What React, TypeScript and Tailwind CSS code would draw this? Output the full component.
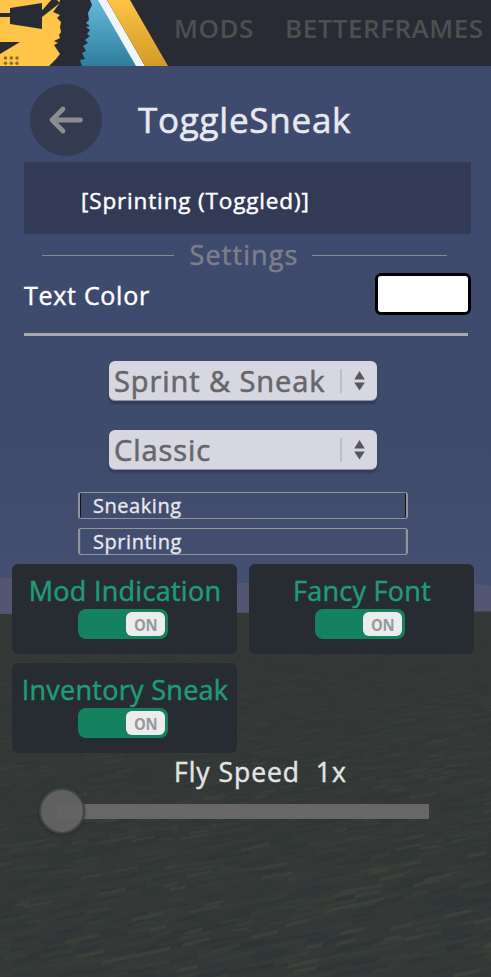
import { useState } from "react";
import clsx from "clsx";

// small seeded generator so the terrain looks the same on every render
function seeded(seed: number) {
  let s = seed;
  return () => {
    s = (s * 1664525 + 1013904223) % 4294967296;
    return s / 4294967296;
  };
}

const GROUND_TONES = ["#2f3537", "#303638", "#303638", "#323839", "#373d39", "#383e39", "#363c38", "#3e443b"];

function buildStreaks() {
  const rand = seeded(71);
  const out: { d: string; fill: string; opacity: number }[] = [];
  let y = 640;
  while (y < 1080) {
    const depth = (Math.min(y, 977) - 613) / 364;
    const h = 0.8 + depth * 3;
    let x = -20 - rand() * 30;
    while (x < 500) {
      const w = 6 + depth * 10 + rand() * (6 + depth * 14);
      if (rand() < 0.6) {
        const slope = 0.05 + depth * 0.17;
        const top = y - x * 0.19 * depth + (rand() - 0.5) * h * 0.8;
        const rise = w * slope;
        const tone = Math.floor(rand() * GROUND_TONES.length);
        out.push({
          d: `M${x.toFixed(1)} ${top.toFixed(1)}l${w.toFixed(1)} ${(-rise).toFixed(1)}l${(-h * 0.4).toFixed(1)} ${h.toFixed(1)}l${(-w).toFixed(1)} ${rise.toFixed(1)}z`,
          fill: GROUND_TONES[tone],
          opacity: 0.1 + depth * 0.75,
        });
      }
      x += w;
    }
    y += h;
  }
  return out;
}

const STREAKS = buildStreaks();

function WorldBackground() {
  return (
    <svg className="absolute inset-0 -z-10" width="491" height="977" viewBox="0 0 491 977" aria-hidden="true">
      <defs>
        <linearGradient id="sky" x1="0" y1="0" x2="0" y2="1">
          <stop offset="0" stopColor="#3e4a6e" />
          <stop offset="0.72" stopColor="#3f4b6d" />
          <stop offset="0.92" stopColor="#434e70" />
          <stop offset="1" stopColor="#485174" />
        </linearGradient>
      </defs>
      <rect width="491" height="616" fill="url(#sky)" />
      <path d="M0 578H237V583H474L491 586V616H0z" fill="#525672" />
      <path d="M0 614L491 611.5V977H0z" fill="#343937" />
      {STREAKS.map((s, i) => (
        <path key={i} d={s.d} fill={s.fill} opacity={s.opacity} />
      ))}
    </svg>
  );
}

function Logo() {
  return (
    <svg width="168" height="66" viewBox="0 0 168 66" className="shrink-0" aria-hidden="true">
      <defs>
        <linearGradient id="blue" x1="0" y1="0" x2="0" y2="1">
          <stop offset="0" stopColor="#64b9da" />
          <stop offset="1" stopColor="#307d9c" />
        </linearGradient>
        <linearGradient id="gold" x1="0" y1="0" x2="0" y2="1">
          <stop offset="0" stopColor="#fcc344" />
          <stop offset="1" stopColor="#d39a28" />
        </linearGradient>
      </defs>
      <path
        d="M0 0H60L59 4L53 12L60 15L57 18L61 22L60 27L61 32L59 35L60 38L54 41L58 43L54 45L60 54L56 59L49 66H0z"
        fill="#ffc548"
      />
      <path d="M0 13H10V8L42 3V10L51 0H57L60 3L42 17V29L10 24V17H0z" fill="#292b34" />
      <path d="M42.5 3V10L51 0H42.5z" fill="#ffc548" />
      <path d="M0 42H20L0 54z" fill="#292b34" />
      <g fill="#8f6b20">
        {[5.5, 11.3, 17].map((x) =>
          [58, 63.3].map((y) => <circle key={`${x}-${y}`} cx={x} cy={y} r="1.7" />)
        )}
      </g>
      <path
        d="M90 0H99L137 66H82L80 60L85 59L82 53L86 51L83 46L88 43L85 40L90 36L87 34L90 30L86 27L90 26L86 23L89 20L88 13L92 5z"
        fill="url(#blue)"
      />
      <path d="M98 0H107L145 66H136z" fill="#f3f4f6" />
      <path d="M107 0H130L168 66H145z" fill="url(#gold)" />
    </svg>
  );
}

function Select({ value }: { value: string }) {
  return (
    <button className="flex h-10 w-[268px] items-center rounded-md border-b border-[#8f91a0] bg-[#d7d7e1] pl-[5px] shadow-[0_3px_2px_rgba(30,34,60,0.4)]">
      <span className="flex-1 whitespace-pre pb-px text-left text-[29px] leading-none tracking-[0.93px] text-[#66666b] [-webkit-text-stroke:0.6px]">
        {value}
      </span>
      <span className="h-6 w-[2px] bg-[#bfbfca]" />
      <svg width="35" height="24" viewBox="0 0 35 24" fill="#57575b" aria-hidden="true">
        <path d="M17.5 2L22.8 10.5H12.2zM12.2 13.5H22.8L17.5 21.5z" />
      </svg>
    </button>
  );
}

function TextField({ value, focused }: { value: string; focused?: boolean }) {
  return (
    <div className="h-[27px] w-[330px] rounded-[3px] border-x-2 border-y border-[#929499]">
      <div
        className={clsx(
          "flex h-full items-center rounded-[2px] border-x pl-3 text-[20px] leading-none tracking-[0.55px] text-[#e7e8ee] [-webkit-text-stroke:0.35px]",
          focused ? "border-[#111218]" : "border-[#535a70]"
        )}
      >
        {value}
      </div>
    </div>
  );
}

function ToggleCard({ label }: { label: string }) {
  const [on, setOn] = useState(true);
  return (
    <div className="flex h-[90px] w-[225px] flex-col items-center rounded-md bg-[#272b32]">
      <div className="flex h-[45px] items-center pt-2 text-[27px] leading-none tracking-[0.28px] whitespace-nowrap text-[#209c74] [-webkit-text-stroke:0.5px]">
        <span className="pl-[1px]">{label}</span>
      </div>
      <button
        onClick={() => setOn(!on)}
        className={clsx(
          "mr-[3px] flex h-[30px] w-[90px] items-center rounded-lg p-[3px]",
          on ? "justify-end bg-[#15825f]" : "justify-start bg-[#555a60]"
        )}
      >
        <span className="flex h-6 w-[39px] items-center justify-center rounded-md bg-[#ececec] pt-[2px] pl-[1px] text-[16px] leading-none font-bold tracking-[-0.2px] text-[#96999b]">
          <span className="inline-block scale-x-[0.93]">{on ? "ON" : "OFF"}</span>
        </span>
      </button>
    </div>
  );
}

export default function App() {
  return (
    <div className="relative isolate h-[977px] w-[491px] overflow-hidden font-['Open_Sans','Noto_Sans',sans-serif]">
      <WorldBackground />

      <header className="flex h-[66px] bg-[#292b34]">
        <Logo />
        <nav className="flex h-[55px] items-center text-[26px] leading-none font-semibold tracking-[0.5px] whitespace-nowrap text-[#4f4f50]">
          <span className="w-[111px] pl-[6px]">MODS</span>
          <span className="pl-[6px]">BETTERFRAMES</span>
        </nav>
      </header>

      <div className="mt-[18px] flex h-[72px] items-center pl-[30px]">
        <button className="flex size-[72px] items-center justify-center rounded-full bg-[#343a4f]" aria-label="Back">
          <svg width="36" height="30" viewBox="0 0 36 30" fill="none" stroke="#8c8d91" strokeWidth="4.8" strokeLinecap="round" strokeLinejoin="round">
            <path d="M32.5 15H4M15 4L4 15L15 26" />
          </svg>
        </button>
        <h1 className="ml-9 pb-px text-[35px] leading-none tracking-[0.75px] text-[#e8e9ef] [-webkit-text-stroke:0.6px]">ToggleSneak</h1>
      </div>

      <div className="mt-[6px] ml-6 flex h-[72px] w-[447px] items-center bg-[#323a56] pt-[7px] pl-[57px] text-[22.5px] leading-none tracking-[0.85px] text-white [-webkit-text-stroke:0.45px]">
        [Sprinting (Toggled)]
      </div>

      <div className="mt-[6px] ml-[42px] flex h-[30px] w-[405px] items-center">
        <span className="h-px w-[132px] bg-[#89898c]" />
        <span className="w-[138px] pb-px pl-[2px] text-center text-[27px] leading-none tracking-[1.1px] text-[#7c7f89] [-webkit-text-stroke:0.5px]">
          Settings
        </span>
        <span className="h-px flex-1 bg-[#89898c]" />
      </div>

      <div className="mt-[3px] flex h-[42px] items-center justify-between pr-5 pl-6">
        <span className="pt-[3px] text-[25px] leading-none tracking-[0.72px] text-white [-webkit-text-stroke:0.45px]">Text Color</span>
        <button className="h-[42px] w-24 rounded-md border-3 border-black bg-white" aria-label="Pick text color" />
      </div>
      <div className="mt-[18px] ml-6 h-[3px] w-[444px] bg-[#aaaab0]" />

      <div className="mt-[25px] ml-[109px] flex flex-col gap-[29px]">
        <Select value="Sprint & Sneak" />
        <Select value="Classic" />
      </div>

      <div className="mt-[22px] ml-[78px] flex flex-col gap-[9px]">
        <TextField value="Sneaking" focused />
        <TextField value="Sprinting" />
      </div>

      <div className="mt-[9px] ml-3 grid grid-cols-[225px_225px] gap-x-3 gap-y-[9px]">
        <ToggleCard label="Mod Indication" />
        <ToggleCard label="Fancy Font" />
        <ToggleCard label="Inventory Sneak" />
      </div>

      <div className="flex h-9 items-center pt-[2px] pl-[174px] text-[26.5px] leading-none tracking-[0.98px] whitespace-pre text-[#e3e5e4] [-webkit-text-stroke:0.45px]">
        {"Fly Speed  1x"}
      </div>
      <div className="relative mt-[15px] ml-[57px] h-[15px] w-[372px] bg-[#676767]">
        <div className="absolute -top-[16px] -left-[18px] size-[46px] rounded-full border-2 border-[#424442] bg-[#5f605f] shadow-[0_1px_3px_rgba(20,22,24,0.5)]">
          <div className="mt-[14px] ml-4 h-[15px] w-[25px] bg-[#636363]" />
        </div>
      </div>
    </div>
  );
}
